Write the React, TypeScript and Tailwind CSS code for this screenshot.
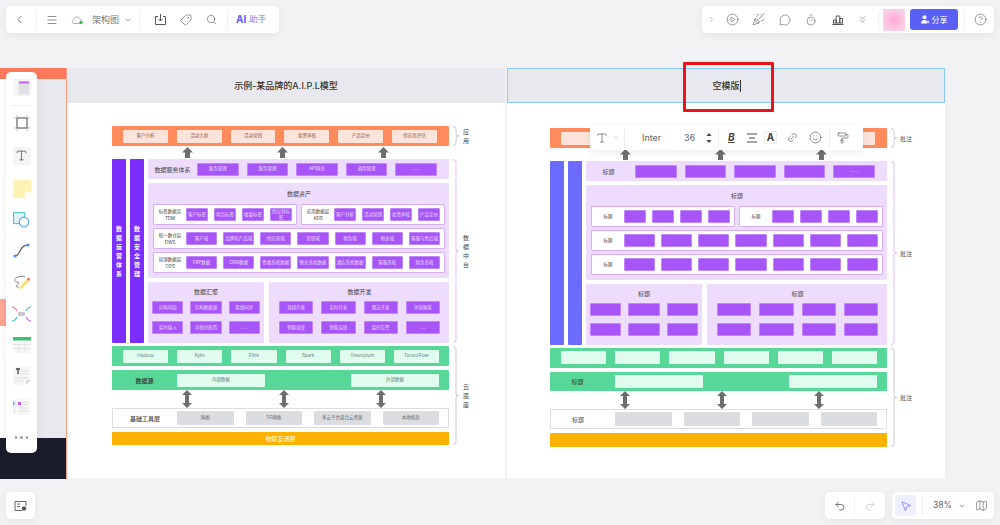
import React from "react";
import {
  ChevronLeft, ChevronRight, ChevronDown, ChevronsDown, Menu, Tag, Search, CirclePlay, PartyPopper,
  MessageCircle, Timer, CircleHelp, MousePointer2, Map as MapIcon, Link2, Smile, PaintRoller, Type,
  Undo2, Redo2,
} from "lucide-react";

const font = "[font-family:Inter,'Noto_Sans_CJK_SC',sans-serif]";

function Brace({ h, color = "#b5b5b5" }: { h: number; color?: string }) {
  const m = h / 2;
  return (
    <svg width="6" height={h} viewBox={`0 0 6 ${h}`} fill="none" className="shrink-0 ml-1">
      <path d={`M0 .5Q3 .5 3 3V${m - 2}Q3 ${m} 5.5 ${m}Q3 ${m} 3 ${m + 2}V${h - 3}Q3 ${h - 0.5} 0 ${h - 0.5}`} stroke={color} strokeWidth=".7" />
    </svg>
  );
}

function Side({ h, color, text, blank }: { h: number; color?: string; text: string; blank: boolean }) {
  return (
    <div className="flex items-center">
      <Brace h={h} color={color} />
      {blank ? (
        <span className="ml-[3px] text-[6px] text-[#555]">批注</span>
      ) : (
        <span className="ml-[3px] w-2 flex flex-col items-center text-[6px] leading-[9px] text-[#444]">
          {text.split("").map((c, i) => <span key={i}>{c}</span>)}
        </span>
      )}
    </div>
  );
}

function UpArrow({ cls }: { cls: string }) {
  return (
    <svg width="11" height="11" viewBox="0 0 11 11" className={cls}>
      <path d="M5.5 0L11 5.5H8V11H3V5.5H0Z" fill="#6e6e6e" />
    </svg>
  );
}

function DoubleArrow({ cls }: { cls: string }) {
  return (
    <svg width="10" height="18" viewBox="0 0 10 18" className={cls}>
      <path d="M5 0L10 5H7V13H10L5 18L0 13H3V5H0Z" fill="#6e6e6e" />
    </svg>
  );
}

function Chip({ t, blank, cls }: { t?: string; blank: boolean; cls: string }) {
  return (
    <div className={`flex-1 min-w-0 flex items-center justify-center text-center leading-[6px] text-[4.5px] rounded-[1px] ${cls}`}>
      {blank && t !== "......" ? "" : t}
    </div>
  );
}

const pc = "h-[13px] bg-[#a855f7] border border-[#c084fc] text-[#eddcff]";

function PurpleRow({ label, sub, items, blank, cls }: { label: string; sub: string; items: string[]; blank: boolean; cls: string }) {
  return (
    <div className={`h-[21px] flex items-center bg-white border border-[#d4aefc] rounded-[1px] pr-1 ${cls}`}>
      <div className="w-[32px] shrink-0 text-center text-[4.5px] leading-[7px] text-[#444]">
        {blank ? "标题" : <>{label}<br />{sub}</>}
      </div>
      <div className="flex-1 flex gap-[6px]">
        {items.map((t, i) => <Chip key={i} t={t} blank={blank} cls={pc} />)}
      </div>
    </div>
  );
}

function Diagram({ blank, accent, cls }: { blank: boolean; accent: string; cls: string }) {
  return (
    <div className={`flex flex-col ${cls}`}>
      <div className="flex">
        <div className="w-[337px] h-[20px] bg-[#ff8a5b] rounded-[1px] flex items-center gap-[9px] pl-[11px] pr-[12px]">
          {["客户分析", "活动大屏", "活动营销", "投资审核", "产品定价", "供应商评估"].map((t) => (
            <Chip key={t} t={t} blank={blank} cls="h-[13px] bg-[#fde4da] text-[#8a5a48]" />
          ))}
        </div>
        <Side h={20} text="应用" blank={blank} />
      </div>
      <div className="w-[337px] h-[13px] flex items-center">
        <UpArrow cls="ml-[70px]" />
        <UpArrow cls="ml-[84px]" />
        <UpArrow cls="ml-[90px]" />
      </div>
      <div className="flex">
        <div className="w-[337px] h-[184px] flex">
          {["数据运营体系", "数据安全管理"].map((t, i) => (
            <div key={t} className={`w-[14px] shrink-0 rounded-[1px] flex flex-col items-center justify-center text-[6px] leading-[9px] font-bold text-white ${i ? "ml-[4px]" : ""}`} style={{ background: accent }}>
              {!blank && t.split("").map((c, j) => <span key={j}>{c}</span>)}
            </div>
          ))}
          <div className="ml-[4px] flex-1 flex flex-col gap-[4px]">
            <div className="h-[20px] bg-[#eedcfd] rounded-[1px] flex items-center pr-[12px]">
              <div className={`w-[49px] shrink-0 text-center text-[6px] text-[#444] ${blank ? "pr-[4px]" : ""}`}>{blank ? "标题" : "数据服务体系"}</div>
              <div className="flex-1 flex gap-[8px]">
                {["服务管理", "服务管理", "API网关", "调用管理", "......"].map((t, i) => <Chip key={i} t={t} blank={blank} cls={pc} />)}
              </div>
            </div>
            <div className="h-[95px] bg-[#eedcfd] rounded-[1px] flex flex-col pl-[5px] pr-[4px]">
              <div className="h-[21px] flex items-center justify-center text-[6px] text-[#444]">{blank ? "标题" : "数据资产"}</div>
              <div className="flex gap-[4px]">
                <PurpleRow cls="flex-1" label="标签数据库" sub="TDM" blank={blank} items={["客户标签", "项目标签", "楼盘标签", "供应商标签"]} />
                <PurpleRow cls="flex-1" label="应用数据层" sub="ADS" blank={blank} items={["客户分析", "活动营销", "投资审核", "产品定价"]} />
              </div>
              <PurpleRow cls="mt-[3px]" label="统一数仓层" sub="DWS" blank={blank} items={["客户域", "品牌和产品域", "供应商域", "营销域", "财务域", "物业域", "客服与售后域"]} />
              <PurpleRow cls="mt-[3px]" label="轻湖数据层" sub="ODS" blank={blank} items={["ERP数据", "CRM数据", "售楼系统数据", "物业系统数据", "酒店系统数据", "客服系统", "财务系统"]} />
            </div>
            <div className="h-[61px] flex gap-[5px]">
              <div className="w-[116px] bg-[#eedcfd] rounded-[1px] px-[4px] flex flex-col">
                <div className="h-[19px] flex items-center justify-center text-[6px] text-[#444]">{blank ? "标题" : "数据汇聚"}</div>
                <div className="grid grid-cols-3 gap-x-[7px] gap-y-[7px]">
                  {["异构同结", "异构数据源", "离线同步", "实时接入", "可视化配置", "....."].map((t, i) => <Chip key={i} t={t} blank={blank} cls={pc} />)}
                </div>
              </div>
              <div className="flex-1 bg-[#eedcfd] rounded-[1px] pl-[10px] pr-[9px] flex flex-col">
                <div className="h-[19px] flex items-center justify-center text-[6px] text-[#444]">{blank ? "标题" : "数据开发"}</div>
                <div className="grid grid-cols-4 gap-x-[8px] gap-y-[7px]">
                  {["离线开发", "实时开发", "算法开发", "环境隔离", "智能调度", "智能运维", "监控告警", "....."].map((t, i) => <Chip key={i} t={t} blank={blank} cls={pc} />)}
                </div>
              </div>
            </div>
          </div>
        </div>
        <Side h={184} color="#d0a8fa" text="数据中台" blank={blank} />
      </div>
      <div className="flex mt-[3px]">
        <div className="w-[337px] h-[99px] flex flex-col">
          <div className="h-[20px] bg-[#57d798] rounded-[1px] flex items-center gap-[9px] pl-[11px] pr-[10px]">
            {["Hadoop", "Kylin", "Flink", "Spark", "Greenplum", "TensorFlow"].map((t) => (
              <Chip key={t} t={t} blank={blank} cls="h-[13px] bg-[#dffcef] text-[#66807a]" />
            ))}
          </div>
          <div className="mt-[4px] h-[20px] bg-[#57d798] rounded-[1px] flex items-center pr-[10px]">
            <div className={`w-[65px] shrink-0 text-center text-[6px] text-[#333] ${blank ? "pr-[10px]" : "font-medium"}`}>{blank ? "标题" : "数据源"}</div>
            <div className="w-[88px] h-[13px] bg-[#dffcef] rounded-[1px] flex items-center justify-center text-[4.5px] text-[#66807a]">{blank ? "" : "内部数据"}</div>
            <div className="w-[88px] h-[13px] ml-auto bg-[#dffcef] rounded-[1px] flex items-center justify-center text-[4.5px] text-[#66807a]">{blank ? "" : "外部数据"}</div>
          </div>
          <div className="h-[18px] flex">
            <DoubleArrow cls="ml-[70px]" />
            <DoubleArrow cls="ml-[87px]" />
            <DoubleArrow cls="ml-[87px]" />
          </div>
          <div className="h-[20px] bg-white border border-[#dddddf] flex items-center pr-[9px]">
            <div className={`w-[64px] shrink-0 text-center text-[6px] text-[#444] ${blank ? "pr-[10px]" : "font-medium"}`}>{blank ? "标题" : "基础工具层"}</div>
            <div className="flex-1 flex gap-[12px]">
              {["网络", "5G网络", "多云平台混合云资源", "本地机房"].map((t) => (
                <Chip key={t} t={t} blank={blank} cls="h-[14px] bg-[#dcdde0] text-[#666]" />
              ))}
            </div>
          </div>
          <div className={`mt-[4px] bg-[#fbb200] rounded-[1px] flex items-center justify-center text-[6px] text-white ${blank ? "h-[14px]" : "h-[13px]"}`}>{blank ? "" : "物联互通层"}</div>
        </div>
        <Side h={99} text="云底座" blank={blank} />
      </div>
    </div>
  );
}

function Div({ cls = "" }: { cls?: string }) {
  return <div className={`w-px h-[20px] bg-[#eeeeee] ${cls}`} />;
}

function TopLeft() {
  return (
    <div className="absolute left-[6px] top-[6px] w-[273px] h-[27px] bg-white rounded-[5px] shadow-[0_2px_8px_rgba(0,0,0,0.06)] flex items-center text-[#555]">
      <ChevronLeft size={13} className="ml-[7px]" strokeWidth={1.4} />
      <Div cls="ml-[10px]" />
      <Menu size={12} className="ml-[9px]" strokeWidth={1.3} />
      <svg width="12" height="10" viewBox="0 0 12 10" className="ml-[13px]" fill="none">
        <path d="M3 8.5H8.5A2.3 2.3 0 0 0 8.8 4 3.2 3.2 0 0 0 2.6 4.6 2 2 0 0 0 3 8.5Z" stroke="#aaa" strokeWidth=".9" />
        <circle cx="10" cy="7.5" r="1.7" fill="#3bc24a" />
      </svg>
      <span className="ml-[9px] text-[9px] text-[#777]">架构图</span>
      <ChevronDown size={8} className="ml-[5px]" strokeWidth={1.6} />
      <Div cls="ml-[7px]" />
      <svg width="13" height="13" viewBox="0 0 13 13" className="ml-[14px]" fill="none" stroke="#555" strokeWidth="1">
        <path d="M4 3.5H1.5V11.5H11.5V3.5H9M6.5 1V8M4.5 6L6.5 8L8.5 6" />
      </svg>
      <Tag size={12} className="ml-[13px] -scale-x-100" strokeWidth={1.2} />
      <Search size={11} className="ml-[14px]" strokeWidth={1.3} />
      <Div cls="ml-[10px]" />
      <span className="ml-[8px] text-[10px] font-bold text-[#5a5ff0]">AI</span>
      <span className="ml-[3px] text-[8.5px] text-[#8080f5]">助手</span>
    </div>
  );
}

function TopRight() {
  return (
    <div className="absolute left-[702px] top-[6px] w-[292px] h-[27px] bg-white rounded-[5px] shadow-[0_2px_8px_rgba(0,0,0,0.06)] flex items-center text-[#555]">
      <ChevronRight size={9} className="ml-[5px] text-[#888]" strokeWidth={1.4} />
      <CirclePlay size={13} className="ml-[10px]" strokeWidth={1.1} />
      <PartyPopper size={13} className="ml-[13px]" strokeWidth={1.1} />
      <MessageCircle size={12} className="ml-[14px]" strokeWidth={1.1} />
      <Timer size={12} className="ml-[14px]" strokeWidth={1.1} />
      <svg width="12" height="12" viewBox="0 0 12 12" className="ml-[15px]" fill="none" stroke="#555" strokeWidth="1">
        <path d="M.5 10.5H11.5M1.5 9V6H4.2V9M4.2 9V2H7.8V9M7.8 9V4.5H10.5V9M1 9H11" />
      </svg>
      <ChevronsDown size={11} className="ml-[13px]" strokeWidth={1.2} />
      <Div cls="ml-[10px]" />
      <div className="ml-[4px] w-[22px] h-[22px] bg-[#f9d0e4] flex items-center justify-center">
        <div className="w-[14px] h-[14px] rounded-full bg-[#ffa9d6] blur-[3px]" />
      </div>
      <button className="ml-[5px] w-[48px] h-[21px] rounded-[3px] bg-[#5a60f5] text-white text-[8px] flex items-center justify-center gap-[2px]">
        <svg width="9" height="9" viewBox="0 0 9 9" fill="white"><circle cx="3.5" cy="2.3" r="2" /><path d="M0 8.5C0 6 1.5 5 3.5 5S6 6 6 8.5Z" /><path d="M7 5.5V8.5M5.5 7H8.5" stroke="white" strokeWidth=".8" /></svg>
        分享
      </button>
      <Div cls="ml-[6px]" />
      <CircleHelp size={13} className="ml-[9px]" strokeWidth={1.1} />
    </div>
  );
}

function Cell({ children, cls = "h-[31px]" }: { children: React.ReactNode; cls?: string }) {
  return <div className={`flex items-center justify-center shrink-0 ${cls}`}>{children}</div>;
}

function Sidebar() {
  return (
    <div className="absolute left-[6px] top-[72px] w-[31px] h-[381px] bg-white rounded-[5px] shadow-[0_2px_8px_rgba(0,0,0,0.08)] flex flex-col">
      <Cell cls="h-[31px]">
        <svg width="18" height="17" viewBox="0 0 18 17"><rect width="18" height="17" fill="#f1f1f4" /><rect x="6" y="5" width="10" height="10" fill="#e0e0e4" /><rect x="6" y="2.5" width="10" height="2" fill="#c05cf0" /><rect x="0" y="0" width="4" height="17" fill="#f8f8f8" /></svg>
      </Cell>
      <div className="mx-[5px] h-px bg-[#eeeeee] mt-[2px] mb-[1px]" />
      <Cell>
        <svg width="16" height="16" viewBox="0 0 16 16" fill="none" stroke="#666"><rect x="3" y="3" width="10" height="10" strokeWidth="1.2" /><path d="M3 0V2M13 0V2M3 14V16M13 14V16M0 3H2M0 13H2M14 3H16M14 13H16" stroke="#aaa" strokeWidth=".8" /></svg>
      </Cell>
      <Cell cls="h-[35px]">
        <div className="w-[18px] h-[18px] bg-[#f4f4f4] rounded-[1px] flex items-center justify-center">
          <Type size={13} strokeWidth={1.3} className="text-[#444]" />
        </div>
      </Cell>
      <Cell>
        <svg width="18" height="18" viewBox="0 0 18 18"><path d="M0 0H18V12L12 18H0Z" fill="#fdf3b4" /><path d="M12 18V12H18Z" fill="#ffffff" /></svg>
      </Cell>
      <Cell>
        <svg width="17" height="16" viewBox="0 0 17 16" fill="none"><rect x=".6" y=".6" width="11" height="11" stroke="#4fc9c4" strokeWidth="1.1" fill="#e3f3f8" /><circle cx="11" cy="10" r="4.8" stroke="#5aa6f5" strokeWidth="1.2" fill="#fff" /></svg>
      </Cell>
      <Cell>
        <svg width="17" height="15" viewBox="0 0 17 15" fill="none"><path d="M2 13C8 13 6 2 15 2" stroke="#555" strokeWidth="1.2" /><circle cx="2" cy="13" r="1.6" fill="#4b8df5" /><circle cx="15" cy="2" r="1.6" fill="#4b8df5" /></svg>
      </Cell>
      <Cell cls="h-[32px]">
        <svg width="17" height="15" viewBox="0 0 17 15" fill="none"><path d="M12 1.5C6 .5 1 3 1.5 5.5S8 6 5 9 3 12 6 12" stroke="#777" strokeWidth=".9" /><path d="M7 12L14 4L16 6L9 13.5L6.5 14Z" fill="#fbdc6a" /><path d="M14 4L15.5 2.5L17 4L16 6Z" fill="#f15a5a" /></svg>
      </Cell>
      <Cell>
        <svg width="19" height="16" viewBox="0 0 19 16" fill="none" strokeWidth="1.1"><rect x="6" y="6" width="7" height="4" fill="#c9c9cd" /><path d="M0 1C3 1 4 3 5 5" stroke="#ee6aa7" /><path d="M19 1C16 1 15 3 14 5" stroke="#4aa8f5" /><path d="M0 15C3 15 4 13 5 11" stroke="#34cfc0" /><path d="M19 15C16 15 15 13 14 11" stroke="#c77af5" /></svg>
      </Cell>
      <Cell>
        <svg width="18" height="16" viewBox="0 0 18 16" fill="none"><rect width="18" height="16" fill="#f7f7f7" /><rect width="18" height="3.5" fill="#3fbe78" /><path d="M0 7.5H18M0 11.5H18M6 3.5V16M12 3.5V16" stroke="#d8d8d8" strokeWidth=".6" /></svg>
      </Cell>
      <Cell>
        <svg width="18" height="18" viewBox="0 0 18 18" fill="none"><path d="M0 0H18V13L13 18H0Z" fill="#f6f6f6" /><path d="M3 2H7M5 2V7" stroke="#444" strokeWidth="1.3" /><path d="M9 4H15M9 7H15M2 11H15M2 14H10" stroke="#d0d0d0" strokeWidth=".7" /><path d="M13 18V13H18Z" fill="#dcdcdc" /></svg>
      </Cell>
      <Cell>
        <svg width="17" height="17" viewBox="0 0 17 17" fill="none"><rect x="0" y="2" width="12" height="14" fill="#eeeeee" /><rect x="3" y="0" width="14" height="17" fill="#f7f7f7" /><rect x="0" y="4" width="1.5" height="3" fill="#6cb0f5" /><rect x="5" y="4" width="3" height="3" fill="#c05cf0" /><path d="M10 4H15M10 6.5H15M6 10H15M6 13H15" stroke="#cfcfcf" strokeWidth=".7" /></svg>
      </Cell>
      <Cell>
        <div className="flex gap-[3px]">
          <div className="w-[2.5px] h-[2.5px] rounded-full bg-[#999]" />
          <div className="w-[2.5px] h-[2.5px] rounded-full bg-[#999]" />
          <div className="w-[2.5px] h-[2.5px] rounded-full bg-[#999]" />
        </div>
      </Cell>
    </div>
  );
}

function TextBar() {
  return (
    <div className="absolute left-[590px] top-[125px] w-[273px] h-[25px] bg-white rounded-[4px] shadow-[0_2px_8px_rgba(0,0,0,0.08)] flex items-center text-[#444]">
      <Type size={12} className="ml-[6px]" strokeWidth={1.2} />
      <ChevronDown size={7} className="ml-[5px] text-[#aaa]" />
      <Div cls="ml-[4px]" />
      <span className="ml-[17px] w-[32px] text-[9px] text-[#666]">Inter</span>
      <span className="ml-[10px] w-[14px] text-[9px] text-[#666]">36</span>
      <svg width="6" height="10" viewBox="0 0 6 10" className="ml-[8px]" fill="#444"><path d="M3 0L5.5 3H.5ZM3 10L.5 7H5.5Z" /></svg>
      <Div cls="ml-[6px]" />
      <span className="ml-[9px] text-[10px] italic font-bold underline text-[#444] w-[10px]">B</span>
      <svg width="12" height="10" viewBox="0 0 12 10" className="ml-[8px]" stroke="#444" strokeWidth="1"><path d="M1 1H11M3 5H9M1 9H11" /></svg>
      <div className="ml-[6px] w-[13px] h-[13px] border border-[#eeeeee] rounded-[1px] flex items-center justify-center text-[10px] font-bold">A</div>
      <Link2 size={11} className="ml-[10px] -rotate-45" strokeWidth={1.2} />
      <Smile size={13} className="ml-[11px]" strokeWidth={1.1} />
      <Div cls="ml-[7px]" />
      <PaintRoller size={12} className="ml-[7px]" strokeWidth={1.2} />
    </div>
  );
}

function BottomBars() {
  return (
    <>
      <div className="absolute left-[6px] top-[492px] w-[29px] h-[27px] bg-white rounded-[5px] shadow-[0_2px_8px_rgba(0,0,0,0.05)] flex items-center justify-center">
        <svg width="13" height="12" viewBox="0 0 13 12" fill="none" stroke="#555" strokeWidth=".9"><path d="M12 6V1.5H1V10.5H8" /><path d="M3 4H6M3 6.5H6" /><circle cx="10" cy="8.5" r="1.8" fill="#555" /></svg>
      </div>
      <div className="absolute left-[825px] top-[492px] w-[60px] h-[27px] bg-white rounded-[5px] shadow-[0_2px_8px_rgba(0,0,0,0.05)] flex items-center">
        <Undo2 size={12} className="ml-[9px] text-[#555]" strokeWidth={1.6} />
        <div className="ml-[8px] w-px h-[20px] bg-[#f2f2f2]" />
        <Redo2 size={12} className="ml-[9px] text-[#cccccc]" strokeWidth={1.6} />
      </div>
      <div className="absolute left-[892px] top-[492px] w-[102px] h-[27px] bg-white rounded-[5px] shadow-[0_2px_8px_rgba(0,0,0,0.05)] flex items-center text-[#555]">
        <div className="ml-[3px] w-[21px] h-[21px] rounded-[3px] bg-[#eef0ff] flex items-center justify-center">
          <MousePointer2 size={12} className="text-[#5a60f5]" strokeWidth={1.3} />
        </div>
        <Div cls="ml-[6px]" />
        <span className="ml-[10px] text-[8.5px] text-[#666]">38%</span>
        <ChevronDown size={8} className="ml-[6px]" strokeWidth={1.6} />
        <MapIcon size={13} className="ml-[9px]" strokeWidth={1.1} />
      </div>
    </>
  );
}

function Frame({ left, title, active, children }: { left: string; title: React.ReactNode; active?: boolean; children: React.ReactNode }) {
  return (
    <div className={`absolute top-[68px] w-[438px] h-[410px] bg-white flex flex-col ${left}`}>
      <div className={`h-[35px] shrink-0 bg-[#e8e9ee] flex items-center justify-center text-[9px] font-medium text-[#333] ${active ? "border border-[#8cc8f8]" : ""}`}>
        {title}
      </div>
      {children}
    </div>
  );
}

export default function App() {
  return (
    <div className={`relative w-[1000px] h-[525px] overflow-hidden bg-[#f2f2f5] ${font}`}>
      <div className="absolute left-0 top-[68px] w-[67px] h-[411px] bg-white border-r border-[#fb9a85] flex flex-col">
        <div className="h-[11px] bg-[#ff7a5c]" />
        <div className="flex-1 flex">
          <div className="w-[6px] flex flex-col pt-[220px]">
            <div className="h-[27px] bg-[#ffa794]" />
          </div>
          <div className="flex-1 bg-[#e8e9ee]" />
        </div>
        <div className="h-[41px] bg-[#1b1c2b]" />
      </div>
      <Frame left="left-[67px]" title="示例-某品牌的A.I.P.L模型">
        <Diagram blank={false} accent="#7c2dff" cls="pl-[45px] pt-[23px]" />
      </Frame>
      <Frame left="left-[507px]" active title={<span className="ml-[1px] flex items-center">空模版<span className="w-px h-[12px] bg-[#333]" /></span>}>
        <Diagram blank accent="#6b6cff" cls="pl-[43px] pt-[25px]" />
      </Frame>
      <div className="absolute left-[683px] top-[62px] w-[91px] h-[50px] border-[3px] border-[#e8141c] rounded-[1px]" />
      <TextBar />
      <Sidebar />
      <TopLeft />
      <TopRight />
      <BottomBars />
    </div>
  );
}
